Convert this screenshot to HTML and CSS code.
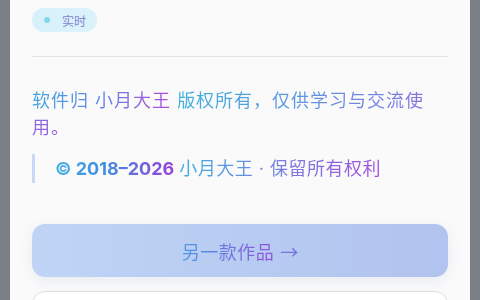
FILE: index.html
```html
<!DOCTYPE html>
<html lang="zh-CN">
  <head>
    <meta charset="UTF-8" />
    <meta name="viewport" content="width=device-width, initial-scale=1.0" />
    <title>关于</title>
    <link rel="stylesheet" href="styles.css">
  </head>
  <body>
    <div class="card">
      <div class="badge">
        <span class="badge-dot"></span>
        <span class="badge-text">实时</span>
      </div>

      <div class="divider"></div>

      <p class="notice">
        <span class="grad grad-a">软件归</span>
        <span class="grad grad-name">小月大王</span>
        <span class="grad grad-b">版权所有，仅供学习与交流使用。</span>
      </p>

      <div class="quote">
        <strong class="grad grad-year">© 2018–2026</strong>
        <span class="grad grad-c">小月大王 · 保留所有权利</span>
      </div>

      <a href="#" class="btn btn-primary">
        <span class="grad grad-btn">另一款作品</span>
        <span class="arrow">→</span>
      </a>

      <a href="#" class="btn btn-outline"></a>
    </div>
  </body>
</html>
```

FILE: styles.css
```css
* {
  margin: 0;
  padding: 0;
  box-sizing: border-box;
}

body {
  font-family: Inter, "Noto Sans CJK SC", sans-serif;
  background: #7b7e84;
  padding: 0 10px;
  height: 300px;
  overflow: hidden;
}

.card {
  background: #fafafa;
  padding: 7px 22px 0;
  min-height: 340px;
}

.badge {
  display: inline-flex;
  align-items: center;
  height: 24px;
  padding: 0 11px 0 12px;
  border-radius: 12px;
  background: linear-gradient(90deg, #d6f1fa, #dcf2fb);
}

.badge-dot {
  width: 6px;
  height: 6px;
  border-radius: 50%;
  background: #86d6ea;
  margin-right: 12px;
}

.badge-text {
  font-size: 12px;
  color: #8084cc;
}

.divider {
  height: 1px;
  background: #e4e4e6;
  margin-top: 24px;
}

.grad {
  -webkit-background-clip: text;
  background-clip: text;
  -webkit-text-fill-color: transparent;
  -webkit-box-decoration-break: slice;
  box-decoration-break: slice;
}

.notice {
  margin-top: 30px;
  font-size: 18px;
  line-height: 27px;
  letter-spacing: 1px;
}

.grad-a {
  background-image: linear-gradient(90deg, #45a6e2, #5d8ce2);
}

.grad-name {
  background-image: linear-gradient(90deg, #5c8ee4, #b047e0);
}

.grad-b {
  background-image: linear-gradient(90deg, #3db2dc, #7d7ce2 80%, #a14ce0);
}

.quote {
  margin-top: 13px;
  border-left: 3px solid #c9d8f4;
  padding: 1px 0 1px 20px;
  font-size: 18px;
  line-height: 27px;
}

.grad-year {
  font-weight: 700;
  background-image: linear-gradient(90deg, #45aee2, #3c8ee2 40%, #9a40d8);
}

.grad-c {
  letter-spacing: 0.5px;
  background-image: linear-gradient(90deg, #3fb0e0, #6b88e2 40%, #a44ede);
}

.btn {
  display: flex;
  align-items: center;
  justify-content: center;
  height: 53px;
  border-radius: 13px;
  text-decoration: none;
  font-size: 18px;
}

.btn-primary {
  margin-top: 41px;
  background: linear-gradient(90deg, #bfd4f5, #b1c3ee);
  box-shadow: 0 4px 14px rgba(110, 130, 200, 0.12);
}

.grad-btn {
  letter-spacing: 0.5px;
  background-image: linear-gradient(90deg, #4d9ae2, #9352de);
}

.arrow {
  margin-left: 6px;
  font-family: "Noto Sans CJK SC", sans-serif;
  color: #7b72da;
}

.btn-outline {
  margin-top: 14px;
  background: #fff;
  border: 1px solid #dcdcdf;
}
```
